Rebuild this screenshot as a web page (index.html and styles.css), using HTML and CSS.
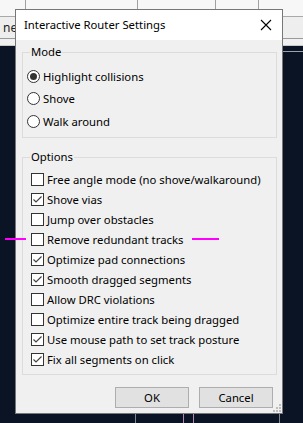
FILE: index.html
```html
<!DOCTYPE html>
<html>
<head>
    <meta charset="UTF-8">
    <meta name="viewport" content="width=device-width, initial-scale=1.0">
    <title>Interactive Router Settings</title>
    <link rel="stylesheet" href="styles.css">
</head>
<body>
    <div class="desk">
        <div class="toolbar">
            <span class="cell c1"></span>
            <span class="cell c2"></span>
            <span class="cell c3"></span>
            <span class="cell c4"></span>
            <span class="cell c5"></span>
        </div>
        <div class="tabs"><span class="tabText">ne</span></div>
        <div class="strip"></div>
        <div class="canvas">
            <span class="trace t1"></span>
            <span class="trace t2"></span>
            <span class="trace t3"></span>
            <span class="trace t4"></span>
        </div>
    </div>

    <div class="dialog">
        <div class="titleBar">
            <span class="title">Interactive Router Settings</span>
            <svg class="close" width="12" height="12" viewBox="0 0 12 12">
                <path d="M1 1 L11 11 M11 1 L1 11" stroke="#000" stroke-width="1.1" fill="none"/>
            </svg>
        </div>
        <div class="body">
            <fieldset class="group mode">
                <legend>Mode</legend>
                <div class="row radioRow"><span class="radio on"></span>Highlight collisions</div>
                <div class="row radioRow"><span class="radio"></span>Shove</div>
                <div class="row radioRow"><span class="radio"></span>Walk around</div>
            </fieldset>

            <fieldset class="group options">
                <legend>Options</legend>
                <div class="row"><span class="check"></span>Free angle mode (no shove/walkaround)</div>
                <div class="row"><span class="check on"><svg width="11" height="11" viewBox="0 0 11 11"><path d="M1.5 5.5 L4 8 L9.5 2.5" stroke="#444" stroke-width="1.2" fill="none"/></svg></span>Shove vias</div>
                <div class="row"><span class="check"></span>Jump over obstacles</div>
                <div class="row"><span class="check"></span>Remove redundant tracks</div>
                <div class="row"><span class="check on"><svg width="11" height="11" viewBox="0 0 11 11"><path d="M1.5 5.5 L4 8 L9.5 2.5" stroke="#444" stroke-width="1.2" fill="none"/></svg></span>Optimize pad connections</div>
                <div class="row"><span class="check on"><svg width="11" height="11" viewBox="0 0 11 11"><path d="M1.5 5.5 L4 8 L9.5 2.5" stroke="#444" stroke-width="1.2" fill="none"/></svg></span>Smooth dragged segments</div>
                <div class="row"><span class="check"></span>Allow DRC violations</div>
                <div class="row"><span class="check"></span>Optimize entire track being dragged</div>
                <div class="row"><span class="check on"><svg width="11" height="11" viewBox="0 0 11 11"><path d="M1.5 5.5 L4 8 L9.5 2.5" stroke="#444" stroke-width="1.2" fill="none"/></svg></span>Use mouse path to set track posture</div>
                <div class="row"><span class="check on"><svg width="11" height="11" viewBox="0 0 11 11"><path d="M1.5 5.5 L4 8 L9.5 2.5" stroke="#444" stroke-width="1.2" fill="none"/></svg></span>Fix all segments on click</div>
            </fieldset>

            <div class="buttons">
                <button class="btn">OK</button>
                <button class="btn">Cancel</button>
            </div>
            <svg class="grip" width="8" height="8" viewBox="0 0 8 8">
                <rect x="6" y="0" width="2" height="2" fill="#bdbdbd"/>
                <rect x="3" y="3" width="2" height="2" fill="#bdbdbd"/>
                <rect x="6" y="3" width="2" height="2" fill="#bdbdbd"/>
                <rect x="0" y="6" width="2" height="2" fill="#bdbdbd"/>
                <rect x="3" y="6" width="2" height="2" fill="#bdbdbd"/>
                <rect x="6" y="6" width="2" height="2" fill="#bdbdbd"/>
            </svg>
        </div>
    </div>

    <span class="mark markLeft"></span>
    <span class="mark markRight"></span>
</body>
</html>
```

FILE: styles.css
```css
*{ margin: 0; padding: 0; box-sizing: border-box; }
html, body{ width: 303px; height: 423px; overflow: hidden; }
body{ background: #0b1424; font-family: "Noto Sans", "Open Sans", sans-serif; font-size: 11.3px; color: #000; position: relative; }

/* window behind */
.desk{ height: 423px; display: flex; flex-direction: column; }
.toolbar{ height: 17px; background: #f7f7f7; border-bottom: 1px solid #a9a9a9; display: flex; }
.cell{ height: 100%; border-right: 1px solid #a0a0a0; }
.c1{ width: 26px; }
.c2{ width: 112px; }
.c3{ width: 78px; }
.c4{ width: 43px; }
.c5{ flex: 1; border-right: none; }
.tabs{ height: 22px; background: #eeeeee; border-bottom: 1px solid #9a9a9a; display: flex; align-items: center; }
.tabText{ padding-left: 3px; color: #222; font-size: 12px; }
.strip{ height: 7px; background: #f0f0f0; border-bottom: 1px solid #c8c8c8; }
.canvas{ flex: 1; background: #0b1424; position: relative; border-top: 5px solid #0b1424; }
.canvas::before{ content: ""; position: absolute; left: 283px; right: 0; top: 0; height: 1px; background: #9aa3ad; }
.trace{ position: absolute; bottom: 0; width: 1px; height: 20px; }
.t1{ left: 135px; background: #7f8791; }
.t2{ left: 183px; background: #b487b4; }
.t3{ left: 193px; background: #b487b4; }
.t4{ left: 279px; background: #7f8791; }

/* dialog */
.dialog{ position: absolute; left: 15px; top: 9px; width: 268px; height: 405px; border: 1px solid #777; background: #f0f0f0; display: flex; flex-direction: column; }
.titleBar{ height: 30px; background: #fff; display: flex; align-items: center; justify-content: space-between; padding: 0 10px 1px 8px; }
.title{ font-size: 11.3px; }
.close{ display: block; }
.body{ flex: 1; position: relative; padding: 4px 5px 0 6px; display: flex; flex-direction: column; }

.group{ border: 1px solid #dcdcdc; padding: 0; }
.group legend{ margin-left: 7px; padding: 0 1px; line-height: 16px; color: #000; }
.mode{ height: 94px; padding-top: 5px; }
.mode .row{ padding-left: 4px; }
.options{ margin-top: 11px; height: 226px; padding-top: 4px; }
.options .row{ padding-left: 8px; }

.row{ height: 20px; display: flex; align-items: center; white-space: nowrap; }
.radioRow{ height: 22.5px; }

.radio{ width: 13px; height: 13px; border: 1px solid #333; border-radius: 50%; background: #fff; margin-right: 3px; display: flex; align-items: center; justify-content: center; }
.radio.on::after{ content: ""; width: 7px; height: 7px; border-radius: 50%; background: #333; }

.check{ width: 13px; height: 13px; border: 1px solid #333; background: #fff; margin-right: 3px; display: flex; align-items: center; justify-content: center; }
.check svg{ display: block; }

.buttons{ display: flex; justify-content: flex-end; gap: 10px; margin-top: 12px; padding-right: 4px; }
.btn{ width: 74px; height: 21px; background: #e1e1e1; border: 1px solid #adadad; font-family: inherit; font-size: 11.3px; color: #000; }

.grip{ position: absolute; right: 1px; bottom: 1px; }

/* annotation lines */
.mark{ position: absolute; height: 2px; background: #ff00ff; top: 238px; }
.markLeft{ left: 5px; width: 21px; }
.markRight{ left: 192px; width: 27px; }
```
